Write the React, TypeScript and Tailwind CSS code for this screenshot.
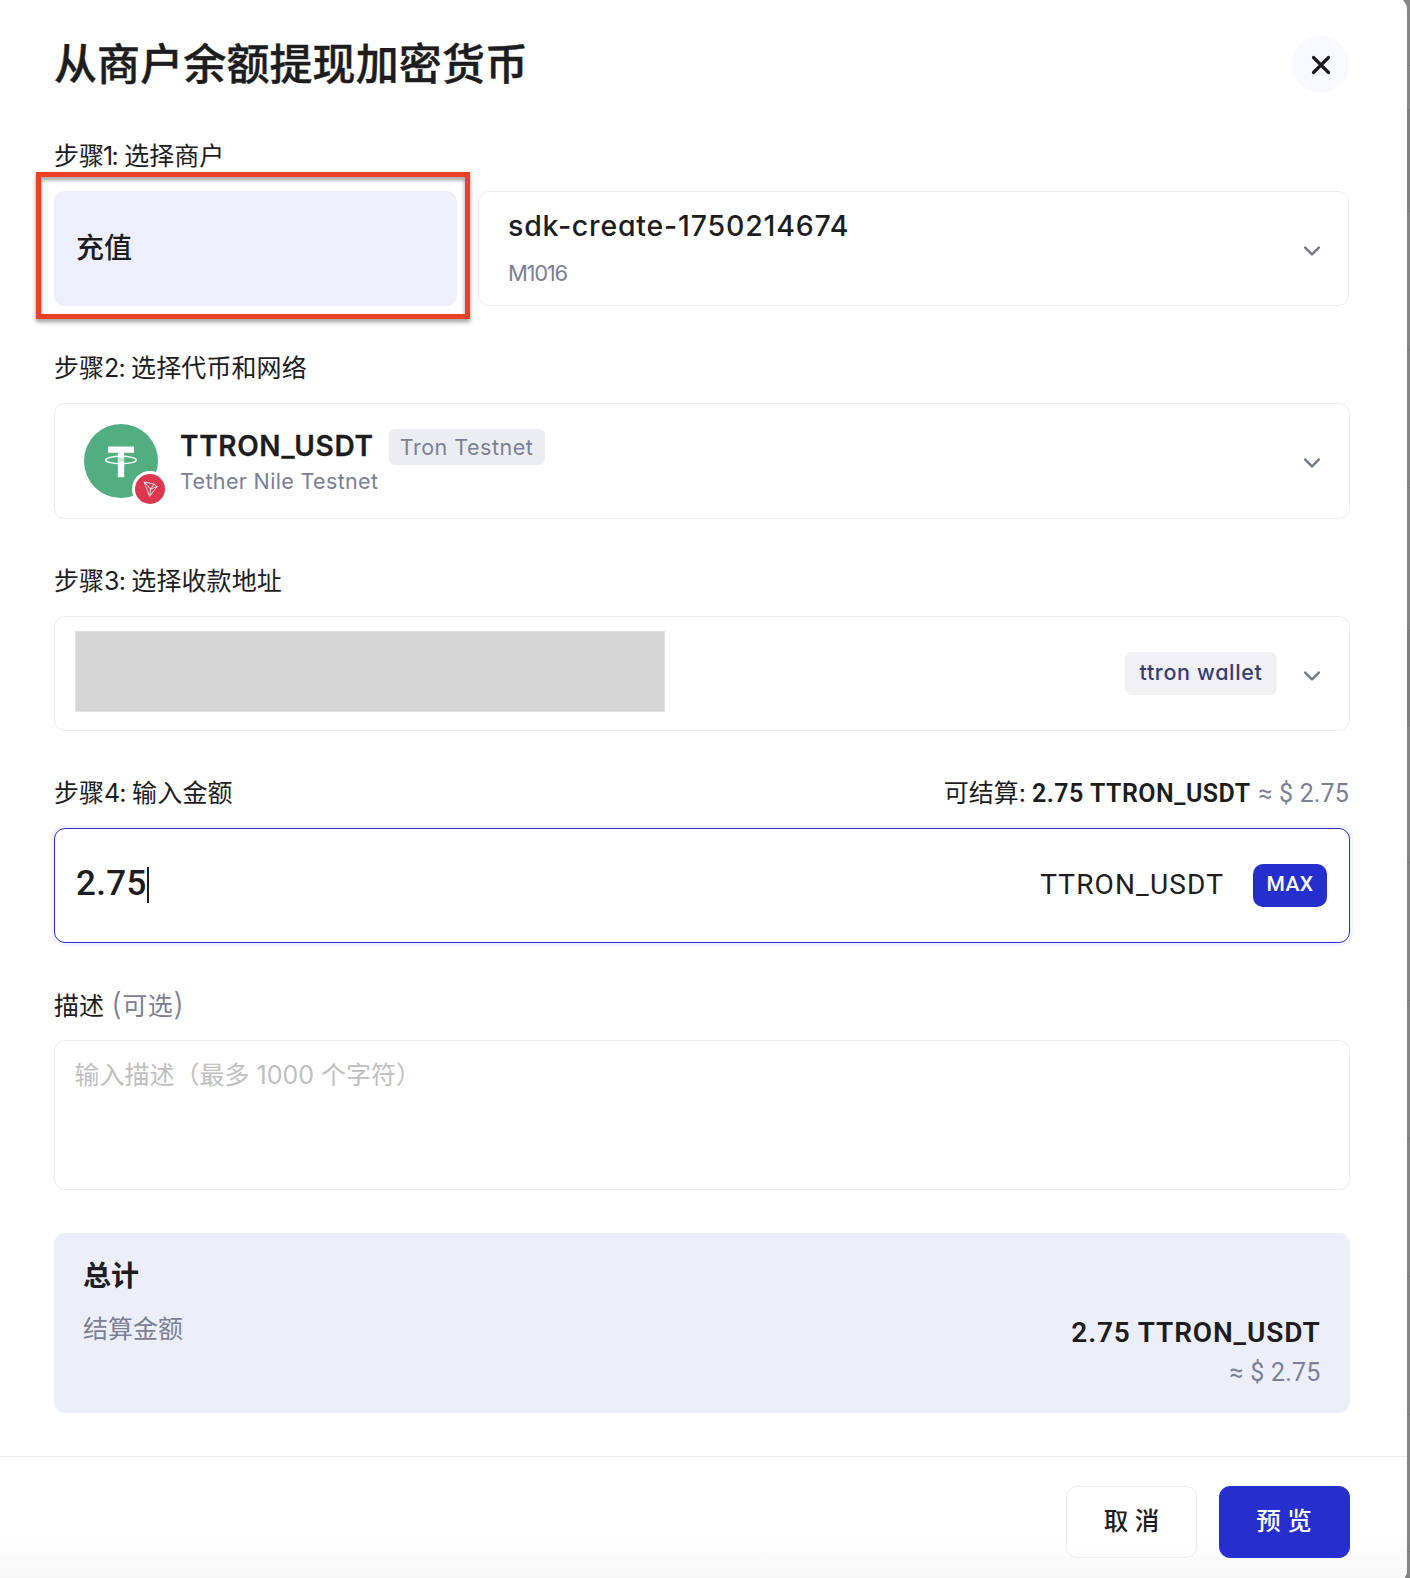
import type { ReactNode } from 'react';

function Chevron() {
  return (
    <svg className="mt-[5px] mr-px h-[11px] w-4 shrink-0" viewBox="0 0 16 11" fill="none" stroke="#737a8e" strokeWidth="2.4" strokeLinecap="round" strokeLinejoin="round">
      <path d="M1.2 1.6 8 8.4 14.8 1.6" />
    </svg>
  );
}

function TokenIcon() {
  return (
    <div className="relative h-[74px] w-[74px] shrink-0">
      <svg className="h-[74px] w-[74px]" viewBox="0 0 74 74">
        <circle cx="37" cy="37" r="37" fill="#50ae81" />
        <path d="M24 22.5h26v6.3h-9.8v24.5h-6.4V28.8H24z" fill="#fff" />
        <path d="M33.8 33.6h6.4v3.8h-6.4z" fill="#50ae81" opacity="0.3" />
        <ellipse cx="37" cy="36" rx="15.3" ry="3.7" fill="none" stroke="#fff" strokeWidth="1.5" />
      </svg>
      <svg className="absolute top-[47px] left-[48px] h-9 w-9" viewBox="0 0 36 36">
        <circle cx="18" cy="18" r="18" fill="#fff" />
        <circle cx="18" cy="18" r="15" fill="#dd3850" />
        <g fill="none" stroke="#fff" strokeOpacity="0.85" strokeWidth="1" strokeLinejoin="round" strokeLinecap="round">
          <path d="M12.6 11.2 22 13l3 2.7-7.2 9.2z" />
          <path d="M12.6 11.2 18.6 18l-.8 6.9M18.6 18 22 13M18.6 18 25 15.7" />
        </g>
      </svg>
    </div>
  );
}

function Label({ children }: { children: ReactNode }) {
  return <div className="flex h-[52px] items-start justify-between text-[25px] leading-[35px]">{children}</div>;
}

function Card({ className, children }: { className: string; children: ReactNode }) {
  return <div className={'flex rounded-[11px] border bg-white ' + className}>{children}</div>;
}

const backdropRows = [
  'h-[66px] bg-[#868686]',
  'h-11 bg-[#868686]',
  'h-[102px] bg-[#808080]',
  'h-[138px] bg-[#848484]',
  'h-[138px] bg-[#848484]',
  'h-[143px] bg-[#848484]',
  'h-[95px] bg-[#7f7f7f]',
  'h-[137px] bg-[#848484]',
  'h-[138px] bg-[#848484]',
  'h-[138px] bg-[#848484]',
  'h-[138px] bg-[#848484]',
  'h-[138px] bg-[#848484]',
  'h-[137px] bg-[#848484]',
  'h-[26px] bg-[#848484]',
];

export default function App() {
  return (
    <div className="flex h-[1578px] w-[1410px] overflow-hidden bg-[#848484] font-['Inter','Noto_Sans_CJK_SC',sans-serif] whitespace-nowrap text-[#1d1d1f]">
      <div className="-mt-1 flex h-[1588px] w-[1407px] shrink-0 flex-col overflow-hidden rounded-r-[14px] bg-white pt-10">
        <header className="flex h-[57px] items-start justify-between pr-[58px] pl-[54px]">
          <h1 className="text-[43px] leading-[56px] font-medium tracking-[0.1px] [-webkit-text-stroke:0.4px_#1d1d1f]">从商户余额提现加密货币</h1>
          <button className="flex h-[57px] w-[57px] items-center justify-center rounded-full bg-[#f8f9fe]" aria-label="关闭">
            <svg className="h-5 w-5" viewBox="0 0 20 20" fill="none" stroke="#1b1b1d" strokeWidth="3.2" strokeLinecap="round">
              <path d="m2.5 2.5 15 15M17.5 2.5l-15 15" />
            </svg>
          </button>
        </header>

        <main className="mt-[46px] flex flex-col gap-[45px] pr-[57px] pl-[54px]">
          <section>
            <Label>
              <span>步骤<span className="-ml-px tracking-[-1.6px]">1:</span> 选择商户</span>
            </Label>
            <div className="flex gap-[21px] pr-px">
              <div className="relative flex h-[115px] w-[403px] items-center rounded-[11px] bg-[#edeffc] pl-[22px]">
                <span className="mb-px text-[28px] leading-9 font-medium">充值</span>
                <div className="absolute -top-[19px] -left-[18px] h-[147px] w-[434px] border-5 border-[#ec4026] drop-shadow-[0_3px_2px_rgba(0,0,0,0.4)]" />
              </div>
              <Card className="h-[115px] flex-1 items-center justify-between border-[#ededf1] pr-[27px] pl-[29px]">
                <div className="h-[115px] pt-[15px]">
                  <div className="text-[28.5px] leading-10 font-medium tracking-[0.8px] [font-feature-settings:'cv11']">sdk-create-1750214674</div>
                  <div className="mt-3 text-[22px] leading-[31px] tracking-[-1.3px] text-[#7b8094]">M1016</div>
                </div>
                <Chevron />
              </Card>
            </div>
          </section>

          <section>
            <Label>
              <span>步骤<span className="tracking-[-0.8px]">2: </span><span className="tracking-[0.1px]">选择代币和网络</span></span>
            </Label>
            <Card className="h-[116px] items-center justify-between border-[#ededf1] pr-[28px] pl-[29px]">
              <div className="flex gap-[22px]">
                <TokenIcon />
                <div className="pt-[5px]">
                  <div className="flex h-9 items-start gap-[15px]">
                    <span className="text-[28px] leading-[34px] font-semibold tracking-[0.65px] [-webkit-text-stroke:0.3px_#1d1d1f]">TTRON_USDT</span>
                    <span className="flex h-9 w-[156px] items-center justify-center rounded-md bg-[#ecedf2] pt-px text-[21.5px] tracking-[0.5px] text-[#7b8094]">Tron Testnet</span>
                  </div>
                  <div className="text-[21.5px] leading-8 tracking-[0.35px] text-[#7b8094]">Tether Nile Testnet</div>
                </div>
              </div>
              <Chevron />
            </Card>
          </section>

          <section>
            <Label>
              <span>步骤<span className="tracking-[-0.8px]">3: </span><span className="tracking-[0.1px]">选择收款地址</span></span>
            </Label>
            <Card className="h-[115px] items-center justify-between border-[#ededf1] pr-[28px] pl-5">
              <div className="mb-[5px] h-[81px] w-[590px] border border-[#e2e2e2] bg-[#d6d6d6]" />
              <div className="flex items-center gap-[27px]">
                <span className="h-[43px] w-[152px] rounded-[7px] bg-[#f0f0f5] text-center text-[21.5px] leading-[41px] font-medium tracking-[0.65px] text-[#363d70] [font-feature-settings:'cv11']">ttron wallet</span>
                <Chevron />
              </div>
            </Card>
          </section>

          <section>
            <Label>
              <span>步骤<span className="tracking-[-0.8px]">4: </span><span className="tracking-[0.2px]">输入金额</span></span>
              <div className="mr-px flex items-baseline font-[Roboto,sans-serif]">
                <span className="font-['Inter','Noto_Sans_CJK_SC',sans-serif]">可结算:</span>
                <span className="ml-1.5 font-semibold tracking-[0.5px]">2.75 TTRON_USDT</span>
                <span className="ml-2 tracking-[0.15px] text-[#7b8094]">≈ $ 2.75</span>
              </div>
            </Label>
            <Card className="h-[115px] items-center justify-between border-[#2630ce] pr-[22px] pl-[21px] font-[Roboto,sans-serif] shadow-[0_0_0_3px_#f1f3fe]">
              <div className="flex items-center">
                <span className="mb-1 text-[35px] leading-10 font-medium tracking-[0.3px]">2.75</span>
                <span className="mb-0.5 h-9 w-0.5 bg-[#1d1d1f]" />
              </div>
              <div className="flex items-center gap-[29px]">
                <span className="mb-0.5 text-[28px] leading-9 tracking-[1.15px]">TTRON_USDT</span>
                <button className="h-[43px] w-[74px] rounded-[10px] bg-[#242fce] pb-[3px] text-center text-[21px] leading-10 font-medium tracking-[0.5px] text-white">MAX</button>
              </div>
            </Card>
          </section>

          <section>
            <Label>
              <span>描述 <span className="tracking-[0.5px] text-[#7b8094]"><span className="text-[31px] leading-none font-light">(</span>可选<span className="text-[31px] leading-none font-light">)</span></span></span>
            </Label>
            <textarea
              className="block h-[150px] w-full resize-none overflow-hidden rounded-[11px] border border-[#ededf1] bg-white pt-[14px] pl-[19.5px] text-[25px] leading-10 outline-none placeholder:text-[#bfbfbf]"
              placeholder="输入描述（最多 1000 个字符）"
            />
          </section>
        </main>

        <section className="mt-[43px] mr-[57px] ml-[54px] h-[180px] rounded-[11px] bg-[#eceefa] pt-[23px] pr-[29.5px] pl-[29px]">
          <h2 className="text-[28px] leading-10 font-bold">总计</h2>
          <div className="flex justify-between">
            <span className="mt-[13px] text-[25px] leading-[41px] text-[#7b8094]">结算金额</span>
            <div className="mt-[17px] text-right font-[Roboto,sans-serif]">
              <div className="text-[28px] leading-10 font-semibold tracking-[0.85px]">2.75 TTRON_USDT</div>
              <div className="text-[25px] leading-10 tracking-[0.2px] text-[#7b8094]">≈ $ 2.75</div>
            </div>
          </div>
        </section>

        <footer className="mt-[43px] flex flex-1 justify-end gap-[22px] border-t border-[#ededf1] bg-linear-to-b from-white from-60% to-[#f6f6f6] pt-[29px] pr-[57px] text-[24.5px] leading-[68px] font-medium">
          <button className="h-[72px] w-[131px] rounded-[11px] border border-[#ededf1] bg-white/60 pb-0.5">取 消</button>
          <button className="h-[72px] w-[131px] rounded-[11px] border border-[#242fce] bg-[#242fce] pr-px pb-0.5 text-white">预 览</button>
        </footer>
      </div>

      <div className="flex flex-col">
        {backdropRows.map((row, i) => (
          <div key={i} className={'w-[3px] shrink-0 border-b border-[#7a7a7a] ' + row} />
        ))}
      </div>
    </div>
  );
}
